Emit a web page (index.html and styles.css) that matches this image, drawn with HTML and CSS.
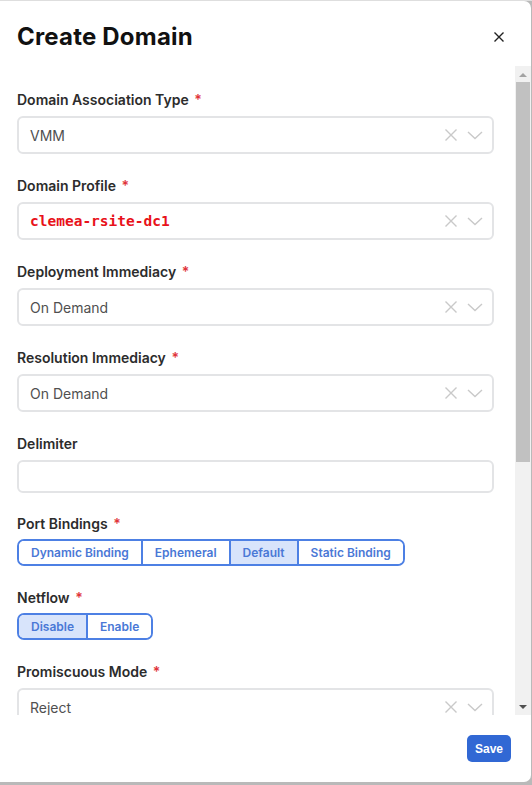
FILE: index.html
```html
<!DOCTYPE html>
<html>
<head>
<meta charset="utf-8">
<link rel="stylesheet" href="styles.css">
</head>
<body>
<div class="modal">
  <div class="header">
    <h1 class="title">Create Domain</h1>
    <button class="close" aria-label="Close">
      <svg width="12" height="12" viewBox="0 0 12 12"><path d="M1.5 1.5L10.5 10.5M10.5 1.5L1.5 10.5" stroke="#222" stroke-width="1.4" fill="none"/></svg>
    </button>
  </div>
  <div class="body">
    <div class="content">
      <div class="field">
        <div class="label">Domain Association Type <span class="req">*</span></div>
        <div class="select"><span class="value">VMM</span><span class="icons"><svg class="ic-x" width="14" height="14" viewBox="0 0 14 14"><path d="M1.5 1.5L12.5 12.5M12.5 1.5L1.5 12.5" stroke="#c9c9c9" stroke-width="1.4" fill="none"/></svg><svg class="ic-c" width="16" height="10" viewBox="0 0 16 10"><path d="M1 2L8 8.5L15 2" stroke="#c9c9c9" stroke-width="1.4" fill="none"/></svg></span></div>
      </div>
      <div class="field">
        <div class="label">Domain Profile <span class="req">*</span></div>
        <div class="select"><span class="value mono">clemea-rsite-dc1</span><span class="icons"><svg class="ic-x" width="14" height="14" viewBox="0 0 14 14"><path d="M1.5 1.5L12.5 12.5M12.5 1.5L1.5 12.5" stroke="#c9c9c9" stroke-width="1.4" fill="none"/></svg><svg class="ic-c" width="16" height="10" viewBox="0 0 16 10"><path d="M1 2L8 8.5L15 2" stroke="#c9c9c9" stroke-width="1.4" fill="none"/></svg></span></div>
      </div>
      <div class="field">
        <div class="label">Deployment Immediacy <span class="req">*</span></div>
        <div class="select"><span class="value">On Demand</span><span class="icons"><svg class="ic-x" width="14" height="14" viewBox="0 0 14 14"><path d="M1.5 1.5L12.5 12.5M12.5 1.5L1.5 12.5" stroke="#c9c9c9" stroke-width="1.4" fill="none"/></svg><svg class="ic-c" width="16" height="10" viewBox="0 0 16 10"><path d="M1 2L8 8.5L15 2" stroke="#c9c9c9" stroke-width="1.4" fill="none"/></svg></span></div>
      </div>
      <div class="field">
        <div class="label">Resolution Immediacy <span class="req">*</span></div>
        <div class="select"><span class="value">On Demand</span><span class="icons"><svg class="ic-x" width="14" height="14" viewBox="0 0 14 14"><path d="M1.5 1.5L12.5 12.5M12.5 1.5L1.5 12.5" stroke="#c9c9c9" stroke-width="1.4" fill="none"/></svg><svg class="ic-c" width="16" height="10" viewBox="0 0 16 10"><path d="M1 2L8 8.5L15 2" stroke="#c9c9c9" stroke-width="1.4" fill="none"/></svg></span></div>
      </div>
      <div class="field delim">
        <div class="label">Delimiter</div>
        <div class="input"></div>
      </div>
      <div class="field seg-field">
        <div class="label">Port Bindings <span class="req">*</span></div>
        <div class="seg">
          <span class="seg-btn">Dynamic Binding</span>
          <span class="seg-btn">Ephemeral</span>
          <span class="seg-btn active">Default</span>
          <span class="seg-btn">Static Binding</span>
        </div>
      </div>
      <div class="field seg-field">
        <div class="label">Netflow <span class="req">*</span></div>
        <div class="seg">
          <span class="seg-btn active">Disable</span>
          <span class="seg-btn">Enable</span>
        </div>
      </div>
      <div class="field">
        <div class="label">Promiscuous Mode <span class="req">*</span></div>
        <div class="select"><span class="value">Reject</span><span class="icons"><svg class="ic-x" width="14" height="14" viewBox="0 0 14 14"><path d="M1.5 1.5L12.5 12.5M12.5 1.5L1.5 12.5" stroke="#c9c9c9" stroke-width="1.4" fill="none"/></svg><svg class="ic-c" width="16" height="10" viewBox="0 0 16 10"><path d="M1 2L8 8.5L15 2" stroke="#c9c9c9" stroke-width="1.4" fill="none"/></svg></span></div>
      </div>
    </div>
    <div class="scrollbar">
      <div class="sb-btn"><svg width="8" height="5" viewBox="0 0 8 5"><path d="M0 5L4 1L8 5Z" fill="#a3a3a3"/></svg></div>
      <div class="sb-track"><div class="sb-thumb"></div></div>
      <div class="sb-btn"><svg width="8" height="5" viewBox="0 0 8 5"><path d="M0 0L4 4L8 0Z" fill="#505050"/></svg></div>
    </div>
  </div>
  <div class="footer">
    <button class="save">Save</button>
  </div>
</div>
</body>
</html>
```

FILE: styles.css
```css
html, body {
  margin: 0;
  padding: 0;
}
body {
  background: #b9b9b9;
  border-top: 1px solid #dedede;
  height: 784px;
  overflow: hidden;
  font-family: Inter, "Noto Sans", sans-serif;
}
.modal {
  width: 531px;
  height: 781px;
  background: #fff;
  border-radius: 0 7px 7px 0;
  display: flex;
  flex-direction: column;
  overflow: hidden;
}
.header {
  height: 65px;
  flex: none;
  display: flex;
  align-items: flex-start;
  justify-content: space-between;
  padding: 20px 26px 0 17px;
  box-sizing: border-box;
}
.title {
  margin: 0;
  font-size: 24px;
  line-height: 32px;
  font-weight: 700;
  color: #111;
  letter-spacing: 0.2px;
}
.close {
  border: none;
  background: none;
  padding: 0;
  margin-top: 10px;
  width: 12px;
  height: 12px;
  display: flex;
}
.body {
  height: 649px;
  flex: none;
  display: flex;
}
.content {
  flex: 1;
  overflow: hidden;
  padding: 24px 21px 0 17px;
}
.field {
  margin-bottom: 22px;
}
.field.delim {
  margin-bottom: 21px;
}
.label {
  font-size: 14px;
  line-height: 20px;
  font-weight: 600;
  color: #2c2c2c;
  margin-bottom: 6px;
}
.req {
  color: #e0343a;
  margin-left: 2px;
}
.select, .input {
  height: 38px;
  box-sizing: border-box;
  border: 2px solid #e3e4e6;
  border-radius: 6px;
  display: flex;
  align-items: center;
  padding: 0 9px 0 11px;
}
.input {
  height: 33px;
}
.value {
  flex: 1;
  font-size: 14px;
  color: #505050;
}
.value.mono {
  font-family: "DejaVu Sans Mono", "Liberation Mono", monospace;
  font-weight: 700;
  font-size: 14.5px;
  color: #e8121a;
}
.icons {
  display: flex;
  align-items: center;
  gap: 9px;
}
.seg-field .label {
  margin-bottom: 5px;
}
.seg {
  display: flex;
  width: fit-content;
  border: 2px solid #4d80e4;
  border-radius: 7px;
  overflow: hidden;
  height: 27px;
  box-sizing: border-box;
}
.seg-btn {
  display: flex;
  align-items: center;
  padding: 0 12px;
  font-size: 12px;
  font-weight: 600;
  color: #4a78d6;
  background: #fff;
}
.seg-btn + .seg-btn {
  border-left: 2px solid #4d80e4;
}
.seg-btn.active {
  background: #d8e4fb;
}
.scrollbar {
  width: 16px;
  flex: none;
  background: #f1f1f1;
  display: flex;
  flex-direction: column;
}
.sb-btn {
  height: 16px;
  display: flex;
  align-items: center;
  justify-content: center;
  flex: none;
}
.sb-track {
  flex: 1;
  padding: 0 1px;
}
.sb-thumb {
  height: 380px;
  background: #c1c1c1;
}
.footer {
  flex: 1;
  display: flex;
  justify-content: flex-end;
  align-items: flex-start;
  padding: 20px 20px 0 0;
}
.save {
  width: 44px;
  height: 27px;
  border: none;
  border-radius: 5px;
  background: #3168d4;
  color: #fff;
  font-family: "Liberation Sans", Arial, sans-serif;
  font-weight: 700;
  font-size: 12px;
  padding: 0;
}
```
